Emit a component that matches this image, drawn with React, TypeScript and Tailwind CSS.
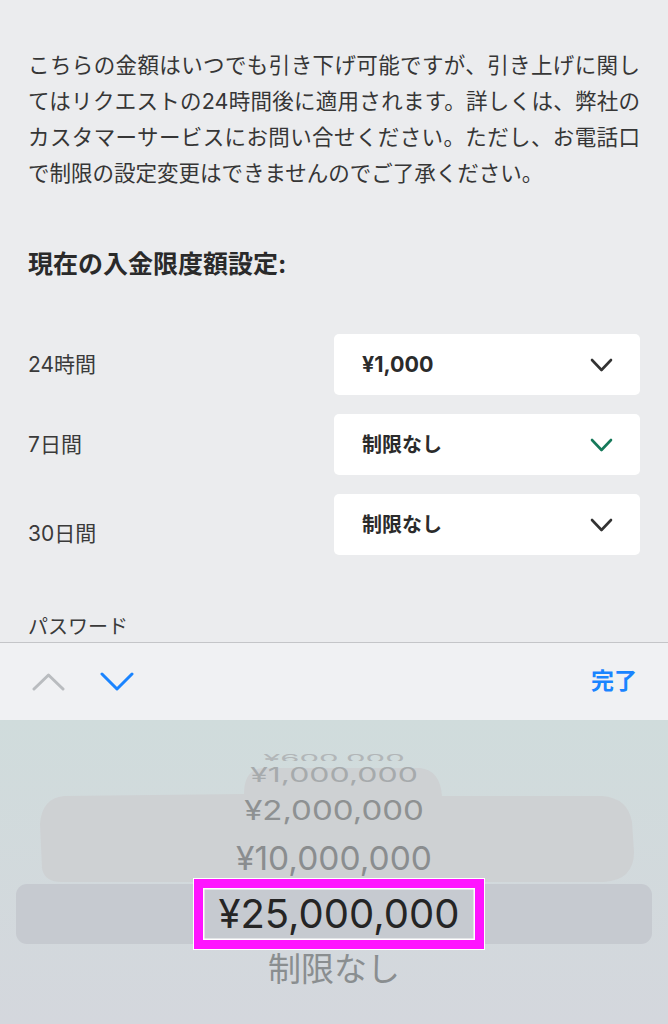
import { ReactNode } from 'react'

const lines = [
  'こちらの金額はいつでも引き下げ可能ですが、引き上げに関し',
  'てはリクエストの24時間後に適用されます。詳しくは、弊社の',
  'カスタマーサービスにお問い合せください。ただし、お電話口',
]

function Chevron({ color, up = false, w = 23, h = 14, sw = 2.6 }: { color: string; up?: boolean; w?: number; h?: number; sw?: number }) {
  const d = up ? `M2 ${h - 2} L${w / 2} 2 L${w - 2} ${h - 2}` : `M2 2 L${w / 2} ${h - 2} L${w - 2} 2`
  return (
    <svg width={w} height={h} viewBox={`0 0 ${w} ${h}`} fill="none">
      <path d={d} stroke={color} strokeWidth={sw} strokeLinecap="round" strokeLinejoin="round" />
    </svg>
  )
}

function LimitRow({ label, value, bold = false, chevron, labelClass = '' }: { label: string; value: ReactNode; bold?: boolean; chevron: string; labelClass?: string }) {
  return (
    <div className="flex h-[61px] items-center">
      <div className={`flex-1 text-[21px] text-[#3a3a3a] ${labelClass}`}>{label}</div>
      <div className="flex h-full w-[306px] items-center justify-between rounded-[5px] bg-white pl-[28px] pr-[27px]">
        <span className={`text-[#2b2b2b] ${bold ? 'text-[21.5px] font-bold' : 'text-[20px] font-semibold'}`}>{value}</span>
        <Chevron color={chevron} />
      </div>
    </div>
  )
}

export default function App() {
  return (
    <div className="flex h-[1024px] w-[668px] flex-col overflow-hidden bg-[#ebecee] font-['Inter','Noto_Sans_CJK_JP',sans-serif]">
      {/* 設定画面 */}
      <div className="flex h-[642px] flex-col overflow-hidden px-[28px] pt-[47px]">
        <div className="text-[21.5px] leading-[36px] text-[#363636]">
          {lines.map((l) => (
            <div key={l} className="whitespace-nowrap text-justify [text-align-last:justify]">
              {l}
            </div>
          ))}
          <div className="whitespace-nowrap">で制限の設定変更はできませんのでご了承ください。</div>
        </div>

        <h2 className="mt-[57px] text-[25px] leading-[32px] font-bold text-[#2a2a2a]">現在の入金限度額設定:</h2>

        <div className="mt-[54px] flex flex-col gap-[19px]">
          <LimitRow label="24時間" value="¥1,000" bold chevron="#333333" />
          <LimitRow label="7日間" value="制限なし" chevron="#16795a" />
          <LimitRow label="30日間" value="制限なし" chevron="#333333" labelClass="pt-[18px]" />
        </div>

        <div className="mt-[58px] text-[20px] leading-[28px] text-[#3a3a3a]">パスワード</div>
      </div>

      {/* キーボードツールバー */}
      <div className="flex h-[78px] items-center border-t-[1.5px] border-[#c4c5c8] bg-[#f0f1f3] pr-[31px] pl-[32px]">
        <Chevron color="#b9bcbf" up w={33} h={18} sw={3} />
        <div className="ml-[35px]">
          <Chevron color="#1a84ff" w={34} h={19} sw={3} />
        </div>
        <div className="ml-auto text-[23px] font-bold text-[#1a84ff]">完了</div>
      </div>

      {/* ピッカー */}
      <div className="relative flex-1 overflow-hidden bg-gradient-to-b from-[#d0dcdc] to-[#d4d7dd]">
        <svg className="absolute inset-0" width="668" height="304" viewBox="0 0 668 304">
          <path
            d="M64 76 Q42 78 40 104 L42 148 Q44 162 62 162 L604 162 Q634 160 634 132 L632 102 Q628 78 602 76 L442 76 Q440 50 420 48 L262 48 Q244 50 244 74 Z"
            fill="#ced1d3"
          />
        </svg>
        <div className="relative flex flex-col items-center pt-[29px] text-[#8c8f91]">
          <div className="flex h-[12px] w-full items-end justify-center overflow-hidden">
            <span className="origin-bottom translate-y-[2px] scale-y-[0.35] text-[31px] leading-[31px] text-[#b2b6b8]">¥600,000</span>
          </div>
          <div className="flex h-[27px] items-center">
            <span className="scale-y-[0.62] text-[32px] leading-[32px] text-[#a6aaac]">¥1,000,000</span>
          </div>
          <div className="flex h-[44px] items-center">
            <span className="scale-y-[0.8] text-[33px] leading-[33px] text-[#8e9192]">¥2,000,000</span>
          </div>
          <div className="flex h-[52px] items-center">
            <span className="scale-y-[0.98] text-[33.5px] leading-[34px] text-[#8a8d8f]">¥10,000,000</span>
          </div>
          <div className="flex h-[60px] w-[636px] items-center justify-center rounded-[11px] bg-[#c6cad0]">
            <div className="ml-[10px] flex h-[70px] w-[290px] items-center justify-center border-[9px] border-[#ff14ff] shadow-[0_0_0_1px_#ffffff]">
              <div className="flex h-full w-full items-center justify-center shadow-[inset_0_0_0_1.5px_#ffffff]">
                <span className="text-[40px] leading-[40px] text-[#252525]">¥25,000,000</span>
              </div>
            </div>
          </div>
          <div className="flex h-[50px] items-center">
            <span className="text-[33px] leading-[34px] text-[#8a8e90]">制限なし</span>
          </div>
        </div>
      </div>
    </div>
  )
}
